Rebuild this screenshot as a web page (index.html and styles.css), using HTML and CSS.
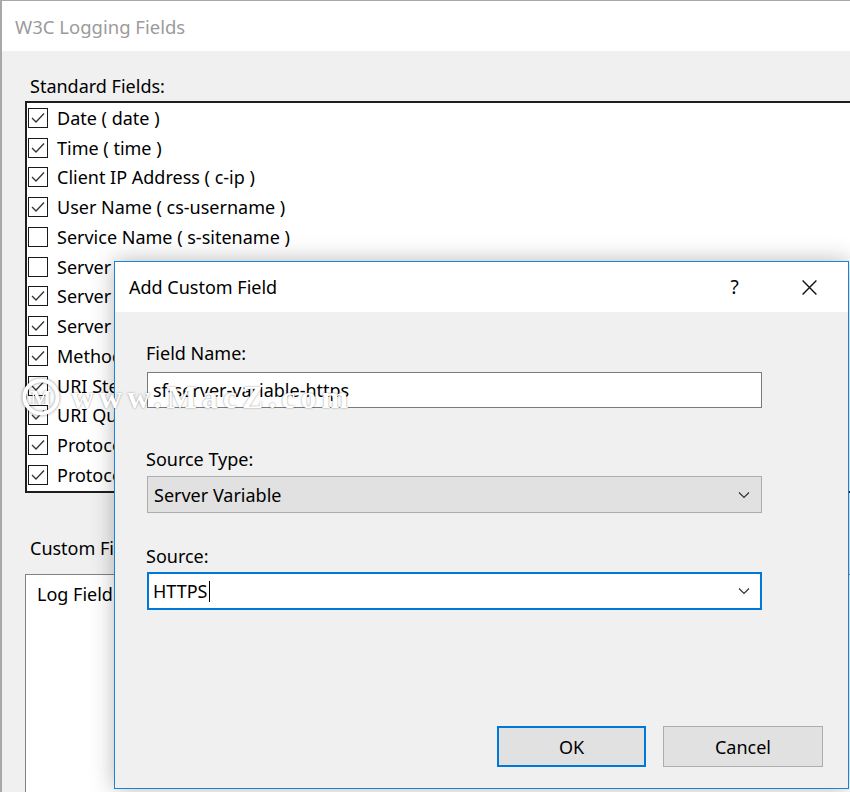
FILE: index.html
```html
<!DOCTYPE html>
<html>
<head>
<meta charset="utf-8">
<title>W3C Logging Fields</title>
<link rel="stylesheet" href="styles.css">
</head>
<body>
<div class="window">
  <div class="titlebar">W3C Logging Fields</div>
  <div class="content">
    <div class="label std-label">Standard Fields:</div>
    <div class="listbox">
      <div class="item"><span class="cb"><svg viewBox="0 0 18 18"><polyline points="3,9 7,13 15,4.5"/></svg></span>Date ( date )</div>
      <div class="item"><span class="cb"><svg viewBox="0 0 18 18"><polyline points="3,9 7,13 15,4.5"/></svg></span>Time ( time )</div>
      <div class="item"><span class="cb"><svg viewBox="0 0 18 18"><polyline points="3,9 7,13 15,4.5"/></svg></span>Client IP Address ( c-ip )</div>
      <div class="item"><span class="cb"><svg viewBox="0 0 18 18"><polyline points="3,9 7,13 15,4.5"/></svg></span>User Name ( cs-username )</div>
      <div class="item"><span class="cb"></span>Service Name ( s-sitename )</div>
      <div class="item"><span class="cb"></span>Server Name ( s-computername )</div>
      <div class="item"><span class="cb"><svg viewBox="0 0 18 18"><polyline points="3,9 7,13 15,4.5"/></svg></span>Server IP Address ( s-ip )</div>
      <div class="item"><span class="cb"><svg viewBox="0 0 18 18"><polyline points="3,9 7,13 15,4.5"/></svg></span>Server Port ( s-port )</div>
      <div class="item"><span class="cb"><svg viewBox="0 0 18 18"><polyline points="3,9 7,13 15,4.5"/></svg></span>Method ( cs-method )</div>
      <div class="item"><span class="cb"><svg viewBox="0 0 18 18"><polyline points="3,9 7,13 15,4.5"/></svg></span>URI Stem ( cs-uri-stem )</div>
      <div class="item"><span class="cb"><svg viewBox="0 0 18 18"><polyline points="3,9 7,13 15,4.5"/></svg></span>URI Query ( cs-uri-query )</div>
      <div class="item"><span class="cb"><svg viewBox="0 0 18 18"><polyline points="3,9 7,13 15,4.5"/></svg></span>Protocol Status ( sc-status )</div>
      <div class="item"><span class="cb"><svg viewBox="0 0 18 18"><polyline points="3,9 7,13 15,4.5"/></svg></span>Protocol Substatus ( sc-substatus )</div>
    </div>
    <div class="label custom-label">Custom Fields:</div>
    <div class="listbox2">
      <div class="lhead">Log Field</div>
    </div>
  </div>
</div>

<div class="dialog">
  <div class="dtitle">
    <span class="dtitle-text">Add Custom Field</span>
    <span class="cap-btn help">?</span>
    <span class="cap-btn close"><svg viewBox="0 0 16 16"><path d="M1.5 1.5 L14.5 14.5 M14.5 1.5 L1.5 14.5"/></svg></span>
  </div>
  <div class="dbody">
    <div class="dlabel l1">Field Name:</div>
    <div class="textbox">sf-server-variable-https</div>
    <div class="dlabel l2">Source Type:</div>
    <div class="select">
      <span>Server Variable</span>
      <svg class="chev" viewBox="0 0 12 8"><polyline points="1,1.5 6,6.5 11,1.5"/></svg>
    </div>
    <div class="dlabel l3">Source:</div>
    <div class="combo">
      <span>HTTPS</span><span class="caret"></span>
      <svg class="chev" viewBox="0 0 12 8"><polyline points="1,1.5 6,6.5 11,1.5"/></svg>
    </div>
    <div class="buttons">
      <div class="btn ok">OK</div>
      <div class="btn cancel">Cancel</div>
    </div>
  </div>
</div>

<div class="watermark">
  <svg class="wm-logo" viewBox="0 0 40 40"><circle cx="20" cy="20" r="16.5"/><text x="20" y="28" text-anchor="middle">M</text></svg>
  <span class="wm-text">www.MacZ.com</span>
</div>
</body>
</html>
```

FILE: styles.css
```css
* { box-sizing: border-box; }

html, body {
  margin: 0;
  padding: 0;
}

body {
  width: 850px;
  height: 792px;
  overflow: hidden;
  background: #f0f0f0;
  font-family: "Noto Sans", "Open Sans", sans-serif;
  font-size: 18px;
  color: #000;
  position: relative;
}

.window {
  width: 850px;
  height: 792px;
  border-left: 2px solid #a8a8a8;
  border-top: 1px solid #a8a8a8;
  background: #f0f0f0;
  overflow: hidden;
}

.titlebar {
  height: 50px;
  background: #fff;
  display: flex;
  align-items: center;
  padding-left: 13px;
  color: #9b9b9b;
  font-size: 18.5px;
}

.content {
  padding-left: 23px;
}

.label {
  line-height: 24px;
  padding-left: 5px;
  white-space: nowrap;
}

.std-label {
  margin-top: 23px;
}

.listbox {
  margin-top: 3px;
  width: 900px;
  background: #fff;
  border: 2px solid #1e1e1e;
  padding-bottom: 1px;
}

.item {
  height: 29.75px;
  display: flex;
  align-items: center;
  white-space: nowrap;
  padding-left: 1px;
}

.cb {
  width: 20px;
  height: 20px;
  border: 1px solid #1a1a1a;
  background: #fff;
  margin-right: 9px;
  display: flex;
  align-items: center;
  justify-content: center;
  flex: none;
}

.cb svg {
  width: 18px;
  height: 18px;
  fill: none;
  stroke: #333;
  stroke-width: 1.3;
}

.custom-label {
  margin-top: 43px;
}

.listbox2 {
  margin-top: 14px;
  width: 900px;
  height: 300px;
  background: #fff;
  border: 1px solid #828282;
}

.lhead {
  padding: 7px 0 0 11px;
  line-height: 24px;
}

/* dialog */
.dialog {
  position: absolute;
  left: 114px;
  top: 261px;
  width: 735px;
  height: 528px;
  border: 1px solid #1883d7;
  background: #f0f0f0;
  box-shadow: 0 0 22px rgba(0, 0, 0, 0.28);
  display: flex;
  flex-direction: column;
}

.dtitle {
  height: 50px;
  background: #fff;
  display: flex;
  align-items: center;
  padding-left: 14px;
  flex: none;
}

.dtitle-text {
  flex: 1;
  font-size: 18px;
}

.cap-btn {
  width: 75px;
  height: 50px;
  display: flex;
  align-items: center;
  justify-content: center;
}

.help {
  font-size: 19px;
}

.close {
  margin-right: 1px;
}

.close svg {
  width: 17px;
  height: 17px;
  fill: none;
  stroke: #111;
  stroke-width: 1.3;
}

.dbody {
  padding-left: 31px;
  display: flex;
  flex-direction: column;
  flex: 1;
}

.dlabel {
  line-height: 24px;
}

.l1 { margin-top: 29px; }
.l2 { margin-top: 39px; }
.l3 { margin-top: 31px; }

.textbox {
  margin-top: 7px;
  margin-left: 1px;
  width: 615px;
  height: 36px;
  background: #fff;
  border: 1px solid #7a7a7a;
  padding-left: 5px;
  display: flex;
  align-items: center;
}

.select {
  margin-top: 5px;
  margin-left: 1px;
  width: 615px;
  height: 37px;
  background: #e1e1e1;
  border: 1px solid #adadad;
  padding-left: 6px;
  padding-right: 11px;
  display: flex;
  align-items: center;
}

.select span, .combo span:first-child {
  flex: none;
}

.chev {
  margin-left: auto;
  width: 12px;
  height: 8px;
  fill: none;
  stroke: #333;
  stroke-width: 1.2;
}

.combo {
  margin-top: 4px;
  margin-left: 1px;
  width: 615px;
  height: 38px;
  background: #fff;
  border: 2px solid #0078d7;
  padding-left: 4px;
  padding-right: 10px;
  display: flex;
  align-items: center;
}

.caret {
  width: 1px;
  height: 21px;
  background: #000;
  margin-left: 1px;
}

.buttons {
  margin-top: 116px;
  display: flex;
  justify-content: flex-end;
  gap: 17px;
  padding-right: 25px;
}

.btn {
  height: 41px;
  background: #e1e1e1;
  display: flex;
  align-items: center;
  justify-content: center;
}

.ok {
  width: 149px;
  border: 2px solid #0078d7;
}

.cancel {
  width: 160px;
  border: 1px solid #adadad;
}

/* watermark overlay */
.watermark {
  position: absolute;
  left: 21px;
  top: 377px;
  display: flex;
  align-items: center;
  gap: 10px;
  pointer-events: none;
}

.wm-logo {
  width: 40px;
  height: 40px;
  fill: none;
  stroke: #fff;
  stroke-width: 4;
  filter: drop-shadow(0 0 1.5px rgba(0, 0, 0, 0.45));
}

.wm-logo text {
  fill: #fff;
  stroke: none;
  font-family: "Liberation Serif", serif;
  font-weight: bold;
  font-size: 22px;
}

.wm-text {
  font-family: "Liberation Serif", serif;
  font-weight: bold;
  font-size: 32px;
  letter-spacing: 5px;
  line-height: 40px;
  color: #fff;
  text-shadow: 0 0 2px rgba(0, 0, 0, 0.45);
  white-space: nowrap;
}
```
